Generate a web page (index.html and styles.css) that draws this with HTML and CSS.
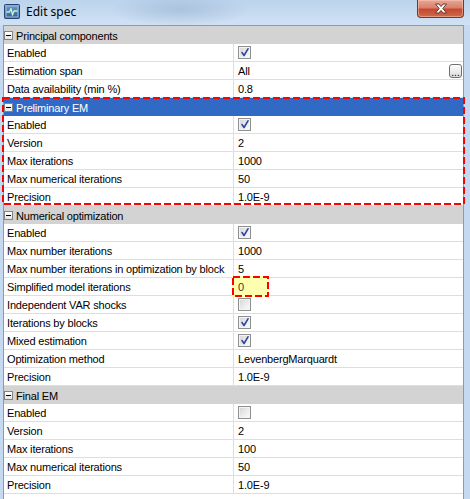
FILE: index.html
```html
<!DOCTYPE html>
<html>
<head>
<meta charset="utf-8">
<title>Edit spec</title>
<link rel="stylesheet" href="styles.css">
</head>
<body>
<div class="window">
  <div class="titlebar">
    <svg class="app-icon" width="16" height="15" viewBox="0 0 16 15">
      <defs>
        <linearGradient id="ig" x1="0" y1="0" x2="0" y2="1">
          <stop offset="0" stop-color="#6f9bd0"/>
          <stop offset="1" stop-color="#2f5c97"/>
        </linearGradient>
      </defs>
      <rect x="0.5" y="0.5" width="15" height="14" rx="1" fill="url(#ig)" stroke="#27456f"/>
      <rect x="2" y="2" width="12" height="11" fill="none" stroke="#9ec0e6" stroke-width="1"/>
      <path d="M2.5 8 H5.5 L7 4.5 L8.5 11 L10 7 H13.5" fill="none" stroke="#c8f5c0" stroke-width="1.3" stroke-linejoin="round"/>
    </svg>
    <span class="title">Edit spec</span>
    <div class="close">
      <svg width="14" height="11" viewBox="0 0 14 11">
        <path d="M1.5 1 H5 L7 3.6 L9 1 H12.5 L8.8 5.5 L12.5 10 H9 L7 7.4 L5 10 H1.5 L5.2 5.5 Z" fill="#ffffff" stroke="#5a2a24" stroke-width="0.9" stroke-linejoin="round"/>
      </svg>
    </div>
  </div>

  <div class="grid">
    <div class="cat"><span class="toggle"></span>Principal components</div>
    <div class="row"><div class="name">Enabled</div><div class="val"><span class="cb"><svg viewBox="0 0 11 11"><path d="M3 5.5 L5 8.5 L9 1.8"/></svg></span></div></div>
    <div class="row"><div class="name">Estimation span</div><div class="val">All<span class="ellipsis">...</span></div></div>
    <div class="row"><div class="name">Data availability (min %)</div><div class="val">0.8</div></div>

    <div class="group marked">
      <div class="cat selected"><span class="toggle"></span>Preliminary EM</div>
      <div class="row"><div class="name">Enabled</div><div class="val"><span class="cb"><svg viewBox="0 0 11 11"><path d="M3 5.5 L5 8.5 L9 1.8"/></svg></span></div></div>
      <div class="row"><div class="name">Version</div><div class="val">2</div></div>
      <div class="row"><div class="name">Max iterations</div><div class="val">1000</div></div>
      <div class="row"><div class="name">Max numerical iterations</div><div class="val">50</div></div>
      <div class="row"><div class="name">Precision</div><div class="val">1.0E-9</div></div>
      <svg class="mark-box" width="463" height="109"><rect x="1" y="1" width="461" height="106"/></svg>
    </div>

    <div class="cat"><span class="toggle"></span>Numerical optimization</div>
    <div class="row"><div class="name">Enabled</div><div class="val"><span class="cb"><svg viewBox="0 0 11 11"><path d="M3 5.5 L5 8.5 L9 1.8"/></svg></span></div></div>
    <div class="row"><div class="name">Max number iterations</div><div class="val">1000</div></div>
    <div class="row"><div class="name">Max number iterations in optimization by block</div><div class="val">5</div></div>
    <div class="row"><div class="name">Simplified model iterations</div><div class="val edited"><span class="edit-box"><svg width="37" height="21"><rect x="1" y="1" width="35" height="19"/></svg></span><span class="edit-text">0</span></div></div>
    <div class="row"><div class="name">Independent VAR shocks</div><div class="val"><span class="cb"></span></div></div>
    <div class="row"><div class="name">Iterations by blocks</div><div class="val"><span class="cb"><svg viewBox="0 0 11 11"><path d="M3 5.5 L5 8.5 L9 1.8"/></svg></span></div></div>
    <div class="row"><div class="name">Mixed estimation</div><div class="val"><span class="cb"><svg viewBox="0 0 11 11"><path d="M3 5.5 L5 8.5 L9 1.8"/></svg></span></div></div>
    <div class="row"><div class="name">Optimization method</div><div class="val">LevenbergMarquardt</div></div>
    <div class="row"><div class="name">Precision</div><div class="val">1.0E-9</div></div>

    <div class="cat"><span class="toggle"></span>Final EM</div>
    <div class="row"><div class="name">Enabled</div><div class="val"><span class="cb"></span></div></div>
    <div class="row"><div class="name">Version</div><div class="val">2</div></div>
    <div class="row"><div class="name">Max iterations</div><div class="val">100</div></div>
    <div class="row"><div class="name">Max numerical iterations</div><div class="val">50</div></div>
    <div class="row"><div class="name">Precision</div><div class="val">1.0E-9</div></div>
  </div>
</div>
</body>
</html>
```

FILE: styles.css
```css
* { box-sizing: border-box; }
html, body { margin: 0; padding: 0; }
body {
  width: 470px;
  height: 499px;
  overflow: hidden;
  font-family: "Liberation Sans", Arial, sans-serif;
  font-size: 11px;
  letter-spacing: -0.18px;
  color: #000;
}
.window {
  width: 470px;
  height: 499px;
  display: flex;
  flex-direction: column;
  background: #c5daf0;
  overflow: hidden;
}
.titlebar {
  height: 25px;
  flex: none;
  display: flex;
  align-items: flex-start;
  letter-spacing: 0;
  background:
    radial-gradient(ellipse 70px 16px at 180px 10px, rgba(125,155,190,0.35), rgba(125,155,190,0) 100%),
    linear-gradient(to bottom, #bcd3ec 0%, #c8dcf1 60%, #cfe1f4 100%);
}
.app-icon {
  margin: 4px 0 0 4px;
  flex: none;
}
.title {
  margin: 4px 0 0 6px;
  font-family: "Noto Sans", "Open Sans", sans-serif;
  font-size: 12px;
  line-height: 16px;
  color: #000;
}
.close {
  margin-left: auto;
  margin-right: 6px;
  width: 47px;
  height: 18px;
  border: 1px solid #7d3428;
  border-top: none;
  border-radius: 0 0 4px 4px;
  background: linear-gradient(to bottom, #e9a796 0%, #d9806d 45%, #c4492f 55%, #cf6a4e 100%);
  box-shadow: inset 0 0 0 1px rgba(255,210,200,0.45);
  display: flex;
  align-items: center;
  justify-content: center;
}
.close svg { display: block; margin-top: -1px; }

.grid {
  flex: 1;
  margin: 0 6px 0 3px;
  background: #fff;
  border: 1px solid #8f9aa8;
  border-bottom: none;
}
.cat {
  height: 18px;
  background: #d3d3d3;
  display: flex;
  align-items: center;
  line-height: 18px;
  padding-top: 1px;
  white-space: nowrap;
}
.cat.selected {
  background: #316ac5;
  color: #fff;
}
.toggle {
  width: 9px;
  height: 9px;
  margin: -1px 3px 0 0;
  border: 1px solid #848484;
  background: linear-gradient(to bottom, #ffffff, #e4e4e4);
  position: relative;
  flex: none;
}
.toggle::after {
  content: "";
  position: absolute;
  left: 1px;
  right: 1px;
  top: 3px;
  height: 1px;
  background: #000;
}
.row {
  height: 18px;
  display: flex;
  border-bottom: 1px solid #dedede;
  white-space: nowrap;
}
.name {
  width: 230px;
  flex: none;
  padding-left: 3px;
  padding-top: 1px;
  border-right: 1px solid #dedede;
  line-height: 17px;
}
.val {
  flex: 1;
  padding-left: 4px;
  padding-top: 1px;
  line-height: 17px;
  display: flex;
  align-items: flex-start;
}
.cb {
  width: 13px;
  height: 13px;
  margin-top: 1px;
  border: 1px solid #8e8f8f;
  background: linear-gradient(135deg, #d4d4d4 0%, #eeeeee 60%, #fafafa 100%);
  box-shadow: inset 0 0 0 1px #f4f4f4;
  display: block;
  position: relative;
}
.cb svg {
  position: absolute;
  left: 0;
  top: 0;
  width: 11px;
  height: 11px;
}
.cb path {
  fill: none;
  stroke: #2c46a0;
  stroke-width: 1.6;
  stroke-linecap: round;
  stroke-linejoin: round;
}
.ellipsis {
  margin-left: auto;
  margin-right: 1px;
  margin-top: 1px;
  width: 13px;
  height: 14px;
  border: 1px solid #707070;
  border-radius: 3px;
  background: linear-gradient(to bottom, #fdfdfd, #dcdcdc);
  font-size: 10px;
  line-height: 16px;
  text-align: center;
  letter-spacing: 0;
  overflow: hidden;
  color: #000;
}
.group.marked {
  position: relative;
}
.mark-box {
  position: absolute;
  left: -2px;
  top: -1px;
  pointer-events: none;
  z-index: 2;
}
.mark-box rect, .edit-box rect {
  fill: none;
  stroke: #ff0000;
  stroke-width: 2;
  stroke-dasharray: 7 3;
}
.val.edited {
  position: relative;
}
.edit-box {
  position: absolute;
  left: -2px;
  top: -2px;
  width: 37px;
  height: 21px;
  background: #ffffb0;
}
.edit-box svg { display: block; }
.edit-text {
  position: relative;
  color: #3a3a20;
}
```
